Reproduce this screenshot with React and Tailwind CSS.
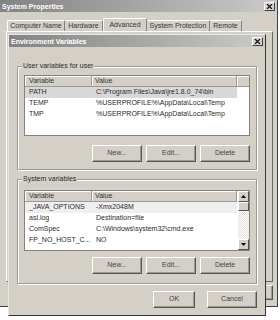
import React from 'react';

const userVars = [
  { name: 'PATH', value: 'C:\\Program Files\\Java\\jre1.8.0_74\\bin', selected: true },
  { name: 'TEMP', value: '%USERPROFILE%\\AppData\\Local\\Temp' },
  { name: 'TMP', value: '%USERPROFILE%\\AppData\\Local\\Temp' },
];

const systemVars = [
  { name: '_JAVA_OPTIONS', value: '-Xmx2048M', hover: true },
  { name: 'asl.log', value: 'Destination=file' },
  { name: 'ComSpec', value: 'C:\\Windows\\system32\\cmd.exe' },
  { name: 'FP_NO_HOST_C...', value: 'NO' },
];

function CloseBox() {
  return (
    <div className="w-[11px] h-[9px] bg-[#d4d0c8] border border-t-white border-l-white border-r-[#404040] border-b-[#404040] flex items-center justify-center">
      <svg width="7" height="5" viewBox="0 0 7 5">
        <path d="M1 0L6 5M6 0L1 5" stroke="#111" strokeWidth="1.2" />
      </svg>
    </div>
  );
}

function TitleBar({ title }) {
  return (
    <div className="flex items-center justify-between h-[12px] pl-[2px] pr-[2px] bg-linear-to-r from-[#838383] to-[#cacaca]">
      <span className="text-white font-bold text-[7px] leading-none">{title}</span>
      <CloseBox />
    </div>
  );
}

function Btn({ children, w = 'w-[50px]', h = 'h-[17px]' }) {
  return (
    <div className={`${w} ${h} flex items-center justify-center bg-[#d4d0c8] border border-t-white border-l-white border-r-[#555] border-b-[#555] shadow-[inset_-1px_-1px_0_#9a9a9a] text-[7px] text-[#444]`}>
      {children}
    </div>
  );
}

function Group({ label, children, pt, pb, mt }) {
  return (
    <fieldset className={`border border-[#9c9a94] shadow-[inset_1px_1px_0_#fff,1px_1px_0_#fff] px-[6px] ${pt} ${pb} ${mt}`}>
      <legend className="-ml-[2px] px-[1px] bg-[#d4d0c8] text-[7px] leading-[8px] text-[#2a2a2a]">{label}</legend>
      {children}
    </fieldset>
  );
}

function Header({ scroll }) {
  return (
    <div className="flex h-[11px] text-[7px] text-[#333]">
      <div className="w-[67px] flex items-center pl-[4px] bg-[#d4d0c8] border-r border-b border-[#9a9a9a] shadow-[inset_1px_1px_0_#fff]">Variable</div>
      <div className="w-[145px] flex items-center pl-[3px] bg-[#d4d0c8] border-r border-b border-[#9a9a9a] shadow-[inset_1px_1px_0_#fff]">Value</div>
      {!scroll && <div className="flex-1 bg-[#d4d0c8] border-b border-[#9a9a9a] shadow-[inset_1px_1px_0_#fff]" />}
    </div>
  );
}

function Row({ v }) {
  return (
    <div className={`flex w-[212px] h-[11px] items-center text-[7px] text-[#2a2a2a] whitespace-nowrap ${v.selected ? 'bg-[#d8d8d8]' : v.hover ? 'bg-[#efefef]' : ''}`}>
      <div className="w-[67px] pl-[4px] overflow-hidden">{v.name}</div>
      <div className="flex-1 pl-[4px] overflow-hidden">{v.value}</div>
    </div>
  );
}

function Arrow({ up }) {
  return (
    <div className="h-[11px] bg-[#d4d0c8] border border-t-white border-l-white border-r-[#555] border-b-[#555] flex items-center justify-center">
      <svg width="5" height="3" viewBox="0 0 5 3">
        {up ? <polygon points="2.5,0 5,3 0,3" fill="#000" /> : <polygon points="0,0 5,0 2.5,3" fill="#000" />}
      </svg>
    </div>
  );
}

function ButtonsRow({ mt }) {
  return (
    <div className={`flex justify-end gap-[4px] ${mt}`}>
      <Btn>New...</Btn>
      <Btn>Edit...</Btn>
      <Btn>Delete</Btn>
    </div>
  );
}

export default function App() {
  return (
    <div className="relative w-[280px] h-[320px] overflow-hidden bg-white font-['Liberation_Sans',Arial,sans-serif]">
      {/* System Properties window (behind) */}
      <div className="absolute left-0 top-0 w-[278px] h-[307px] flex flex-col bg-[#d4d0c8] border-r border-b border-r-[#404040] border-b-[#404040]">
        <TitleBar title="System Properties" />
        <div className="flex items-end h-[13px] mt-[6px] pl-[7px] text-[7px] text-[#333] whitespace-nowrap">
          <div className="w-[58px] h-[11px] flex items-center justify-center border-t border-l border-r border-t-white border-l-white border-r-[#808080] rounded-t-[2px]">Computer Name</div>
          <div className="w-[38px] h-[11px] flex items-center justify-center border-t border-r border-t-white border-r-[#808080] rounded-t-[2px]">Hardware</div>
          <div className="w-[44px] h-[13px] flex items-center justify-center border-t border-l border-r border-t-white border-l-white border-r-[#808080] rounded-t-[2px] bg-[#d4d0c8]">Advanced</div>
          <div className="w-[63px] h-[11px] flex items-center justify-center border-t border-r border-t-white border-r-[#808080] rounded-t-[2px]">System Protection</div>
          <div className="w-[32px] h-[11px] flex items-center justify-center border-t border-r border-t-white border-r-[#808080] rounded-t-[2px]">Remote</div>
        </div>
        <div className="h-[251px] ml-[6px] mr-[4px] border border-t-white border-l-white border-r-[#666] border-b-[#666]" />
        <div className="flex justify-end gap-[6px] mt-[3px] pr-[4px]">
          <Btn h="h-[15px]">OK</Btn>
          <Btn h="h-[15px]">Cancel</Btn>
          <Btn h="h-[15px]">Apply</Btn>
        </div>
      </div>

      {/* Environment Variables dialog (front) */}
      <div className="absolute left-[8px] top-[34px] w-[258px] h-[282px] flex flex-col bg-[#d4d0c8] border border-t-[#e8e8e8] border-l-[#e8e8e8] border-r-[#333] border-b-[#333]">
        <TitleBar title="Environment Variables" />
        <div className="flex flex-col px-[8px]">
          <Group label="User variables for user" mt="mt-[15px]" pt="pt-[5px]" pb="pb-[7px]">
            <div className="h-[61px] bg-white border border-[#828282] overflow-hidden">
              <Header />
              {userVars.map((v) => <Row key={v.name} v={v} />)}
            </div>
            <ButtonsRow mt="mt-[9px]" />
          </Group>

          <Group label="System variables" mt="mt-[5px]" pt="pt-[7px]" pb="pb-[9px]">
            <div className="h-[61px] bg-white border border-[#828282] flex">
              <div className="flex-1 flex flex-col overflow-hidden">
                <Header scroll />
                {systemVars.map((v) => <Row key={v.name} v={v} />)}
              </div>
              <div className="w-[11px] flex flex-col">
                <Arrow up />
                <div className="h-[9px] bg-[#d4d0c8] border border-t-white border-l-white border-r-[#555] border-b-[#555]" />
                <div className="flex-1 bg-[repeating-conic-gradient(#e2dfd8_0%_25%,#ffffff_0%_50%)] bg-[length:2px_2px]" />
                <Arrow />
              </div>
            </div>
            <ButtonsRow mt="mt-[6px]" />
          </Group>

          <div className="flex justify-end gap-[12px] mt-[7px]">
            <Btn w="w-[42px]">OK</Btn>
            <Btn w="w-[50px]">Cancel</Btn>
          </div>
        </div>
      </div>
    </div>
  );
}
